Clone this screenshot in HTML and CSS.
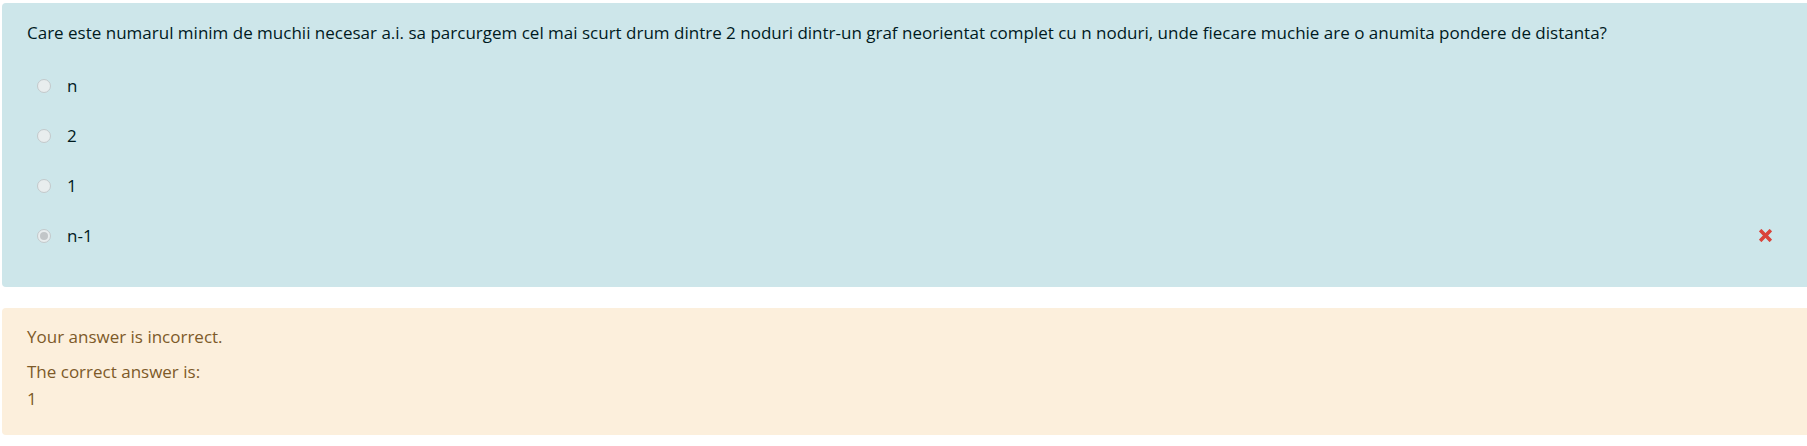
FILE: index.html
```html
<!DOCTYPE html>
<html lang="ro">
<head>
<meta charset="utf-8">
<title>Quiz question</title>
<link rel="stylesheet" href="styles.css">
</head>
<body>
<div class="que">
  <div class="formulation">
    <div class="qtext">Care este numarul minim de muchii necesar a.i. sa parcurgem cel mai scurt drum dintre 2 noduri dintr-un graf neorientat complet cu n noduri, unde fiecare muchie are o anumita pondere de distanta?</div>
    <div class="answer">
      <div class="opt"><span class="radio"></span><span class="label">n</span></div>
      <div class="opt"><span class="radio"></span><span class="label">2</span></div>
      <div class="opt"><span class="radio"></span><span class="label">1</span></div>
      <div class="opt"><span class="radio checked"></span><span class="label">n-1</span>
        <svg class="wrong" viewBox="0 0 12 12" width="13" height="13" aria-label="Incorrect">
          <path d="M2.2 0.6 L6 4.4 L9.8 0.6 L11.4 2.2 L7.6 6 L11.4 9.8 L9.8 11.4 L6 7.6 L2.2 11.4 L0.6 9.8 L4.4 6 L0.6 2.2 Z" fill="#d9443a" stroke="#d9443a" stroke-width="1" stroke-linejoin="round"/>
        </svg>
      </div>
    </div>
  </div>
  <div class="outcome">
    <div class="feedback">Your answer is incorrect.</div>
    <div class="rightanswer">The correct answer is:<br>1</div>
  </div>
</div>
</body>
</html>
```
FILE: styles.css
```css
html, body {
  margin: 0;
  padding: 0;
  overflow: hidden;
  background: #ffffff;
}
body {
  font-family: "Open Sans", "Noto Sans", sans-serif;
  font-size: 17px;
  line-height: 27px;
}
.que {
  padding: 3px 0 0 2px;
}
.formulation {
  background: #cde6ea;
  color: #001a1e;
  border-radius: 4px;
  margin-right: -12px;
  padding: 15.5px 25px 26.5px 25px;
}
.qtext {
  margin-bottom: 15px;
  white-space: nowrap;
}
.answer {
  display: flex;
  flex-direction: column;
}
.opt {
  display: flex;
  align-items: center;
  height: 50px;
  padding-left: 10px;
}
.radio {
  box-sizing: border-box;
  width: 14px;
  height: 14px;
  border-radius: 50%;
  border: 1px solid #c3c9cb;
  background: #e8edee;
  margin-right: 16px;
  display: flex;
  align-items: center;
  justify-content: center;
  flex: none;
}
.radio.checked::after {
  content: "";
  width: 8px;
  height: 8px;
  border-radius: 50%;
  background: #c2c6c8;
}
.label {
  color: #001a1e;
}
.wrong {
  margin-left: auto;
  margin-right: 22px;
  flex: none;
}
.outcome {
  margin-top: 21px;
  background: #fcefdc;
  color: #7d5a29;
  border-radius: 4px;
  margin-right: -12px;
  padding: 14.5px 25px 23px 25px;
}
.feedback {
  margin-bottom: 8.5px;
}
```
